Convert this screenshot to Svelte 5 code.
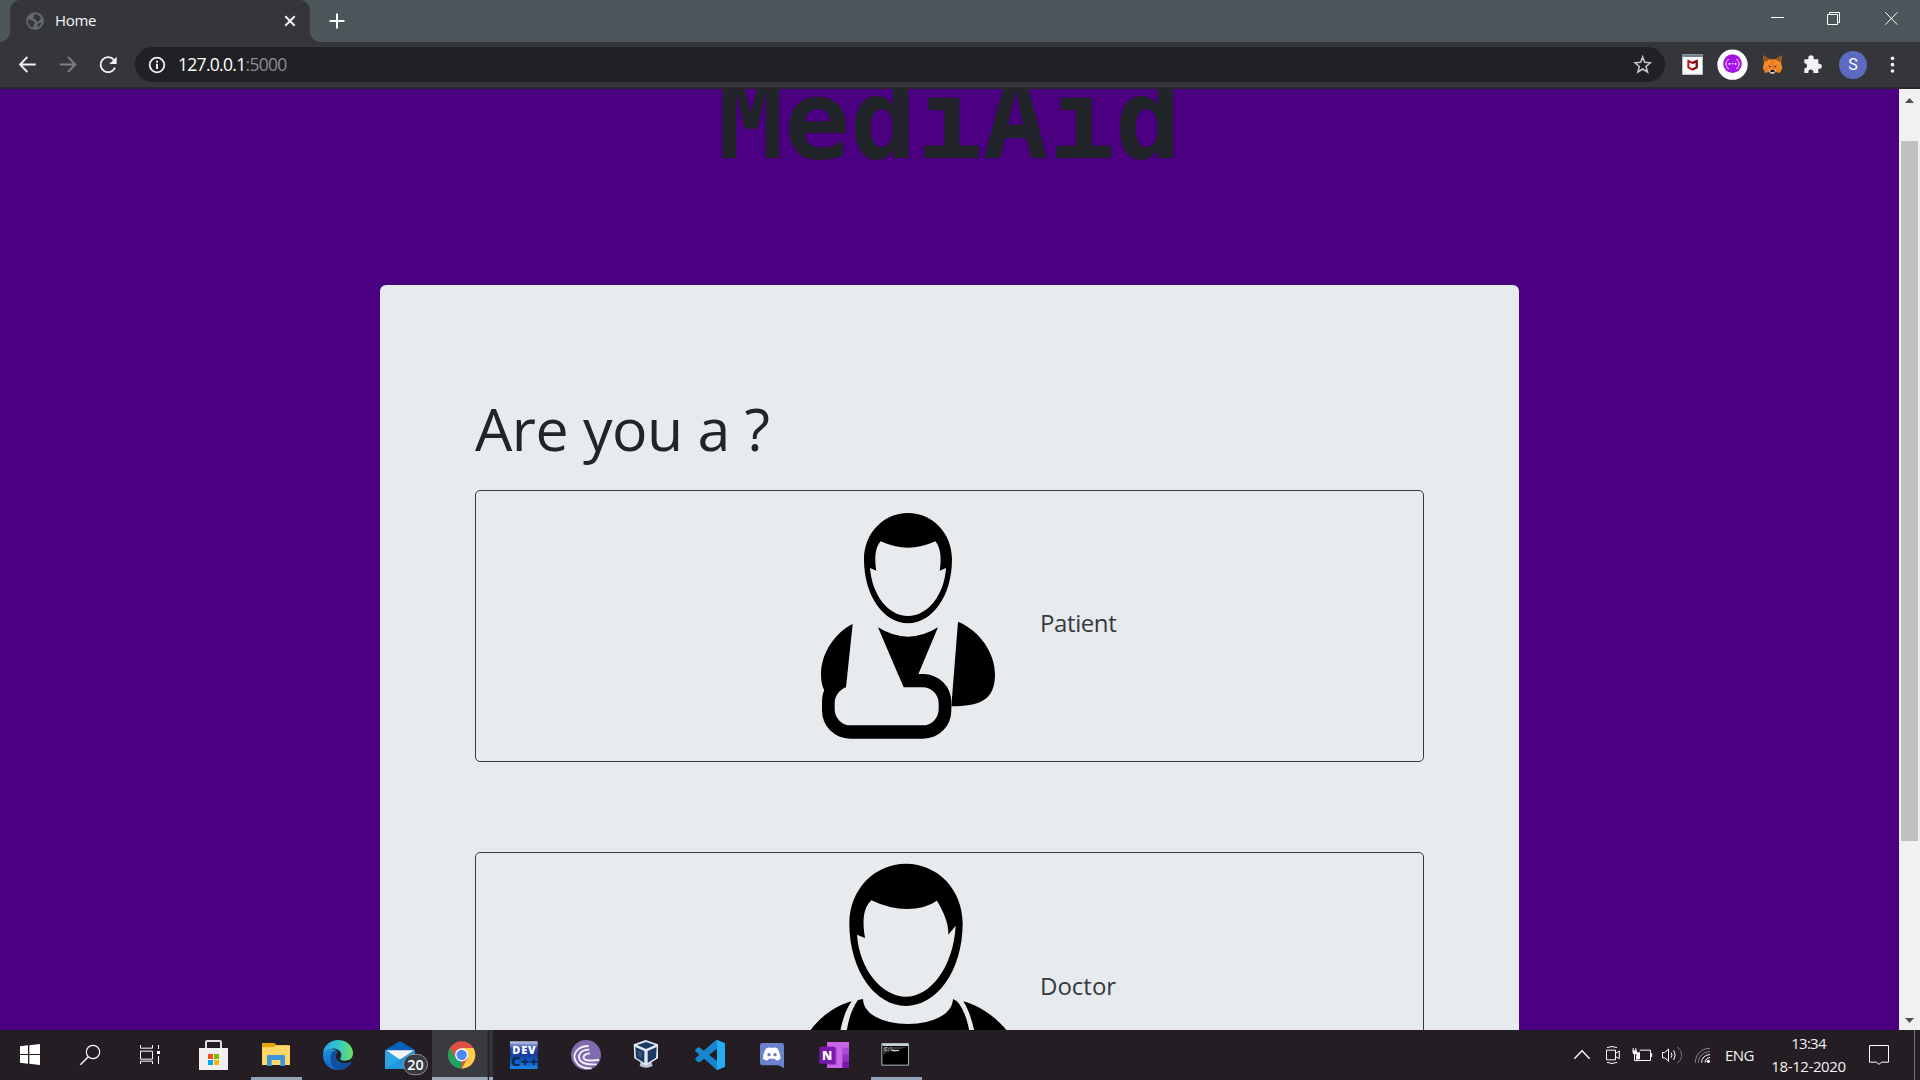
<script>
  const roles = [
    { name: 'Patient', kind: 'patient' },
    { name: 'Doctor', kind: 'doctor' }
  ];
</script>

<div class="screen">
  <header class="tabs">
    <div class="tab">
      <svg class="fav" width="18" height="18" viewBox="0 0 18 18"><circle cx="9" cy="9" r="8.8" fill="#66696e" /><path d="M2.5 6.2C4 9 7.5 8 8.5 10.500C9 12 7 12 7.500 15.500C4 15 2 12 2 9ZM8 2.500C11 1.500 14 4 15 6C13 8 13.500 10 11 9.500C9.500 8 10 7 7.500 6.500C6 5.500 8.500 4.500 8 2.500ZM11.500 12C13 11 15 11 15.500 10.500C15 13 13.500 14.500 11.500 15.300Z" fill="#35363a" /></svg>
      <span class="tab-name">Home</span>
      <svg class="close" width="12" height="12" viewBox="0 0 12 12"><path d="M1.300 1.300 10.700 10.700M10.700 1.300 1.300 10.700" stroke="#f5f5f5" stroke-width="2" /></svg>
    </div>
    <svg class="plus" width="16" height="16" viewBox="0 0 16 16"><path d="M8 .5V15.500M.5 8H15.500" stroke="#fff" stroke-width="2" /></svg>
    <svg class="win" width="170" height="42" viewBox="450 0 510 126" fill="none" stroke="#fff" stroke-width="3"><path d="M513 52.500H552M682.500 43.500H712.500V73.500H682.500ZM688.500 43V37.500H718.500V67.500H713M856 37 892 74M892 37 856 74" /></svg>
  </header>

  <div class="toolbar">
    <svg class="nav" width="135" height="45" viewBox="0 126 405 135" fill="none" stroke-width="5.500"><path d="M107 193.500H61M82 171 60 193.500 82 216" stroke="#f1f3f4" /><path d="M179 193.500H225M204 171 226 193.500 204 216" stroke="#7c7e82" /><path d="M342 180A22.500 22.500 0 1 0 345 203" stroke="#f1f3f4" /><path d="M350 170V192H328Z" fill="#f1f3f4" /></svg>
    <div class="address">
      <svg width="18" height="18" viewBox="0 0 18 18"><circle cx="9" cy="9" r="7.300" fill="none" stroke="#f1f3f4" stroke-width="1.800" /><path d="M9 7.800V13M9 4.700V6.500" stroke="#f1f3f4" stroke-width="2" /></svg>
      <span class="url">127.0.0.1<i>:5000</i></span>
      <svg class="star" width="40" height="35" viewBox="75 141 120 105"><path d="M128 171 134 187 151 188.500 138 199.500 142.500 216 128 207 113.500 216 118 199.500 105 188.500 122 187Z" fill="none" stroke="#c6c8ca" stroke-width="4.500" /></svg>
    </div>
    <svg width="47" height="45" viewBox="195 126 141 135"><path d="M247 163H308V224H247Z" fill="#fff" /><path d="M247 163H308V171H247Z" fill="#6e8490" /><path d="M247 221H308V224H247Z" fill="#ccc" /><path d="M265 183 277.500 189 290 183V202L277.500 209 265 202Z" fill="none" stroke="#c01818" stroke-width="6" /><path d="M277.500 189 290 183V202L277.500 209" fill="none" stroke="#7d1015" stroke-width="6" /></svg>
    <svg width="41" height="45" viewBox="336 126 123 135"><circle cx="397.500" cy="194" r="45.500" fill="#fff" /><circle cx="397.500" cy="191" r="28" fill="#a414e8" /><path d="M387 178Q380 178 380 185T375 192Q380 192 380 199T387 206M408 178Q415 178 415 185T420 192Q415 192 415 199T408 206" fill="none" stroke="#e5c2fb" stroke-width="3" /><path d="M386 189H391V194H386ZM404 189H409V194H404ZM395 190H400V193H395Z" fill="#fff" /></svg>
    <svg width="40" height="45" viewBox="459 126 120 135"><path d="M489 166 510 178H525L546 166 543 188 547 205 540 219 526 216 521 221H513L508 216 495 219 489 205 492 188Z" fill="#ee7d20" /><path d="M489 166 510 178 495 187ZM546 166 525 178 540 187Z" fill="#95531f" /><path d="M495 187 510 178 514 201 489 205ZM540 187 525 178 521 201 547 205Z" fill="#f58a2a" /><path d="M503 195 513 199 510 203ZM532 195 522 199 525 203Z" fill="#3b3a43" /><path d="M505 207 513 210H522L530 207 526 216 521 221H513L508 216Z" fill="#d6bfb2" /><path d="M512 210H523L524 216H511Z" fill="#171717" /></svg>
    <svg width="40" height="45" viewBox="579 126 120 135"><path d="M613 178H625V174A7.500 7.500 0 0 1 641 174V178H655V191H658A7.500 7.500 0 0 1 658 206H655V219H640V216A7.500 7.500 0 0 0 625 216V219H613V205H616A8 8 0 0 0 616 190H613Z" fill="#f1f3f4" /></svg>
    <div class="avatar"><span>S</span></div>
    <svg width="47" height="45" viewBox="819 126 141 135" fill="#f1f3f4"><circle cx="877.500" cy="175" r="5.500" /><circle cx="877.500" cy="194" r="5.500" /><circle cx="877.500" cy="213" r="5.500" /></svg>
  </div>

  <div class="view">
    <main>
      <h1>MediAid</h1>
      <section class="card">
        <h2>Are you a ?</h2>
        {#each roles as role}
          <button>
            {#if role.kind === 'patient'}
              <svg width="230" height="270" viewBox="0 3 690 810">
                <path fill-rule="evenodd" d="M324 69C398 69 456 130 456 208C456 320 395 400 324 400S192 320 192 208C192 130 250 69 324 69ZM242 154C225 172 223 205 229 242L210 234C216 315 265 378 324 378S433 315 438 234L419 242C425 205 422 172 406 154Q324 192 242 154Z" />
                <path d="M158 402C105 428 63 490 63 553C63 575 67 592 74 603L138 592ZM474 395C540 422 585 490 585 553C585 635 535 648 454 649ZM234 412Q324 468 414 412L354 555H295Z" />
                <path d="M294 552H370A84 84 0 0 1 454 637V661A84 84 0 0 1 370 746H150A84 84 0 0 1 66 661V637Q66 610 76 595L139 592A50 50 0 0 0 104 642V658A48 48 0 0 0 152 706H368A48 48 0 0 0 416 658V640A48 48 0 0 0 368 592H311Z" />
              </svg>
            {:else}
              <svg width="230" height="270" viewBox="60 39 690 810">
                <path fill-rule="evenodd" d="M378 71C474 71 548 150 548 250C548 395 468 498 378 498S208 395 208 250C208 150 282 71 378 71ZM274 181C248 205 247 245 255 294L231 284C238 390 308 470 378 470S520 385 527 257L505 284C506 245 488 212 471 182Q434 207 381 207T274 181Z" />
                <path d="M215 484C160 500 113 535 78 590V740H175C168 640 175 540 215 484ZM550 484C605 500 655 535 695 590V740H592C600 640 585 540 550 484ZM234 480 249 477C252 577 515 577 519 477L531 484C570 530 580 610 572 740H197C190 620 195 535 234 480Z" />
              </svg>
            {/if}
            <span class={role.kind}>{role.name}</span>
          </button>
        {/each}
      </section>
    </main>
    <aside>
      <svg width="21" height="17" viewBox="0 0 21 17"><path d="M6 14H15L10.500 9Z" fill="#505050" /></svg>
      <div class="thumb"></div>
      <svg class="down" width="21" height="17" viewBox="0 0 21 17"><path d="M6 5H15L10.500 10Z" fill="#505050" /></svg>
    </aside>
  </div>

  <footer>
    <svg width="60" height="50" viewBox="0 30 180 150"><path d="M60 79 84 76V102H60ZM88 75.500 120 72V102H88ZM60 105H84V131L60 128ZM88 105H120V135L88 131.500Z" fill="#fff" /></svg>
    <svg width="60" height="50" viewBox="180 30 180 150"><circle cx="279" cy="96" r="20" fill="none" stroke="#fff" stroke-width="3.500" /><path d="M264 111 241 134" stroke="#fff" stroke-width="4" /></svg>
    <svg width="62" height="50" viewBox="360 30 186 150"><path d="M421.500 75V84.500H457.500V75M421.500 93.500H457.500V117.500H421.500ZM421.500 132V123.500H457.500V132M475.500 75V87M475.500 108V132" fill="none" stroke="#fff" stroke-width="3" /><path d="M471 93H480V102H471Z" fill="#fff" /></svg>
    <svg width="62" height="50" viewBox="546 30 186 150"><path d="M618 88V66Q618 63 622 63H659Q663 63 663 66V88" fill="none" stroke="#dedede" stroke-width="6" /><path d="M597 84H684V150H597Z" fill="#f0f0f0" /><path d="M624 102H639V117H624Z" fill="#f25022" /><path d="M642 102H657V117H642Z" fill="#7fba00" /><path d="M624 120H639V135H624Z" fill="#00a4ef" /><path d="M642 120H657V135H642Z" fill="#ffb900" /></svg>
    <svg width="63" height="50" viewBox="732 30 189 150"><path d="M786 69H823L829 76H866Q870 76 870 80V135H786Z" fill="#e5a50a" /><path d="M786 82H820L828 76H866Q870 76 870 80V135H786Z" fill="#ffd766" /><path d="M801 138V109Q801 105 805 105H851Q855 105 855 109V138H841V120H815V138Z" fill="#3e95dc" /><path d="M753 171H906V180H753Z" fill="#93a2b5" /></svg>
    <svg width="62" height="50" viewBox="921 30 186 150">
      <defs><linearGradient id="edge-a" x1="0" x2="1"><stop offset="0" stop-color="#27a9e1" /><stop offset=".5" stop-color="#2fc5cf" /><stop offset="1" stop-color="#6be35b" /></linearGradient><linearGradient id="edge-b" x2="0" y2="1"><stop offset="0" stop-color="#2191d8" /><stop offset="1" stop-color="#0b65c2" /></linearGradient></defs>
      <path d="M969 101C971 76 991 60 1014 60C1041 60 1059 79 1059 99C1059 118 1045 122 1035 122C1024 122 1018 119 1022 113C1030 98 1015 84 997 86C983 87 974 93 969 101Z" fill="url(#edge-a)" />
      <path d="M969 104C968 130 988 150 1014 150C1032 150 1047 141 1055 126C1040 132 1024 132 1013 122C1003 113 1006 101 1013 96C1000 80 973 85 969 104Z" fill="url(#edge-b)" />
      <path d="M996 96C985 119 996 144 1014 150C1032 150 1047 141 1055 126C1034 135 1008 128 1006 107C1006 101 1010 97 1013 96C1008 92 1000 92 996 96Z" fill="#104f9c" />
    </svg>
    <svg width="63" height="50" viewBox="1107 30 189 150"><path d="M1155 90 1200 63 1245 90V147H1155Z" fill="#0b61b8" /><path d="M1158 91H1243L1200 120Z" fill="#f3f3f3" /><path d="M1155 91 1245 147H1155Z" fill="#2ba6e4" /><path d="M1245 91V147H1155Z" fill="#2296db" /><rect x="1210.500" y="103" width="72" height="61" rx="30.500" fill="#353b42" stroke="#a2a5a8" stroke-width="2.500" /><text class="badge" x="1246.500" y="150" text-anchor="middle">20</text></svg>
    <svg width="61" height="50" viewBox="1296 30 183 150"><path d="M1296 30H1463V180H1296Z" fill="#393b41" /><path d="M1464 30H1467V180H1464Z" fill="#1f2023" /><path d="M1467 30H1479V180H1467Z" fill="#303338" /><path d="M1296 171H1463V180H1296ZM1467 171H1479V180H1467Z" fill="#9aa8ba" /><circle cx="1385" cy="104.500" r="41" fill="#de5145" /><path d="M1349.500 84 1367 114.500 1385 125 1385 145.500A41 41 0 0 1 1349.500 84Z" fill="#1da25f" /><path d="M1385 84H1420.500A41 41 0 0 1 1385 145.500L1403 115Z" fill="#ffcd46" /><circle cx="1385" cy="104.500" r="20" fill="#f1f1f1" /><circle cx="1385" cy="104.500" r="15.500" fill="#4a8af4" /></svg>
    <svg width="62" height="50" viewBox="39 30 186 150"><defs><linearGradient id="dev" x2="0" y2="1"><stop offset="0" stop-color="#c9cfed" /><stop offset=".25" stop-color="#294ba9" /><stop offset=".5" stop-color="#153e9c" /><stop offset="1" stop-color="#1686ed" /></linearGradient></defs><path d="M90 64H173V147H90Z" fill="url(#dev)" /><text class="dev" x="97" y="101" textLength="70" fill="#fff">DEV</text><text class="cpp" x="92" y="139" textLength="83" lengthAdjust="spacingAndGlyphs" fill="#0c2857">C++</text></svg>
    <svg width="62" height="50" viewBox="225 30 186 150" fill="none"><circle cx="318" cy="105" r="45" fill="#7f6bae" /><g stroke="#f4f1fa" stroke-width="5.500"><path d="M326 78C292 78 276 103 287 123C296 141 315 146 335 145" /><path d="M328 89C301 89 291 107 301 122C311 134 329 134 350 133" /><path d="M330 100C313 100 305 112 315 119C325 124 340 121 357 120" /></g></svg>
    <svg width="62" height="50" viewBox="411 30 186 150"><path d="M482 125H514L518 138Q498 149 479 138Z" fill="#b8c4db" /><path d="M461 73 497 60 534 73V115L498 137 463 115Z" fill="#e1e8f0" /><path d="M471 75 498 66 525 75 498 87ZM466 81 493 93V129L468 113ZM530 81 503 93V129L528 113Z" fill="#1b3962" /><path d="M474 91 486 96V114L474 106Z" fill="#31547e" /></svg>
    <svg width="62" height="50" viewBox="597 30 186 150"><path d="M711 60 735 70V140L711 150 646 94Q644 91 647 88L654 82Q657 81 660 83L711 123V86L660 126Q657 128 654 126L647 120Q644 117 647 114L704 63Q707 59 711 60Z" fill="#1686cf" /><path d="M711 60 735 70V140L711 150Z" fill="#25adf2" /></svg>
    <svg width="62" height="50" viewBox="783 30 186 150"><path d="M847 69H905Q912 69 912 76V145L896 136H847Q840 136 840 129V76Q840 69 847 69Z" fill="#6c82cf" /><path d="M859 85Q868 80 875 84Q883 80 892 85Q902 100 902 116Q895 122 888 121L884 116H867L863 121Q855 122 849 116Q849 99 859 85Z" fill="#fff" /><circle cx="867" cy="104" r="5" fill="#6379c6" /><circle cx="885" cy="104" r="5" fill="#6379c6" /></svg>
    <svg width="62" height="50" viewBox="969 30 186 150"><path d="M1041 66H1107V144H1041Z" fill="#ca64e9" /><path d="M1087 83H1107V103H1087Z" fill="#ae4bd5" /><path d="M1087 103H1107V124H1087Z" fill="#9332bf" /><path d="M1087 124H1107V144H1087Z" fill="#7719aa" /><path d="M1041 83H1069V134H1041Z" fill="#8a31ae" /><path d="M1018 80H1065V131H1018Z" fill="#7719aa" /><text class="note" x="1041.500" y="120" text-anchor="middle">N</text></svg>
    <svg width="61" height="50" viewBox="1155 30 183 150"><path d="M1205.500 70.500H1285.500V135.500H1205.500Z" fill="#000" stroke="#aebabf" stroke-width="3" /><path d="M1207 72H1284V78H1207Z" fill="#c8d0d3" /><path d="M1207 80H1284C1260 90 1225 88 1207 108Z" fill="#353535" /><text class="prompt" x="1213" y="93">C:\_</text><path d="M1235 92H1257" stroke="#eee" stroke-width="3" /><path d="M1173 171H1326V180H1173Z" fill="#93a2b5" /></svg>

    <div class="tray">
      <svg width="156" height="50" viewBox="90 150 468 150" fill="none" stroke="#fff" stroke-width="3">
        <path d="M103 236 126 212 149 236" stroke-width="4" />
        <path d="M199.500 210.500H226.500V239.500H199.500ZM227 220 238 213V236L227 230M201 203Q216 196 231 203M201 247Q216 254 231 247" />
        <path d="M299 210.500H331.500V241.500H290.500V228M279.500 204V211M287.500 204V211M283.500 224V242H293M335 219V231" /><path d="M277 211H291Q291 224 284 224T277 211ZM289 217H300V238H289Z" fill="#fff" stroke="none" />
        <path d="M367.500 217.500H374L385.500 207V243L374 233.500H367.500ZM393 218Q399 225 393 233M401 211Q410 225 401 240" /><path d="M411 201C429 210 429 242 411 249" stroke="#777277" />
        <path d="M466 248C466 224 484 205 510 205M475 248C476 229 490 215 510 215" stroke="#8b878b" /><path d="M485 248C485 234 495 224 510 224M495 248C495 239 501 233 510 233" /><circle cx="505" cy="244" r="5" fill="#fff" stroke="none" />
      </svg>
      <span class="lang">ENG</span>
      <div class="clock"><span class="time">13:34</span><span class="date">18-12-2020</span></div>
      <svg width="70" height="50" viewBox="930 150 210 150" fill="none"><path d="M988.500 196.500H1045.500V246.500H1025L1017 253 1009 246.500H988.500Z" stroke="#fff" stroke-width="3" /><path d="M1123.500 150V300" stroke="#7a767b" stroke-width="3" /></svg>
    </div>
  </footer>
</div>

<style>
  :global(body) { margin: 0; overflow: hidden; }
  .screen { width: 1920px; height: 1080px; display: flex; flex-direction: column; overflow: hidden; font-family: "Open Sans", "Noto Sans", sans-serif; background: #4b0082; }
  svg { display: block; flex: none; }
  .tabs { height: 42px; flex: none; display: flex; align-items: center; background: #4c555a; padding-left: 10px; }
  .tab { position: relative; width: 300px; height: 42px; box-sizing: border-box; display: flex; align-items: center; padding: 0 14px 0 16px; background: #35363a; border-radius: 10px 10px 0 0; }
  .tab::before, .tab::after { content: ""; position: absolute; bottom: 0; width: 10px; height: 10px; }
  .tab::before { left: -10px; background: radial-gradient(circle at 0 0, transparent 9.5px, #35363a 10px); }
  .tab::after { right: -10px; background: radial-gradient(circle at 100% 0, transparent 9.5px, #35363a 10px); }
  .tab-name { margin-left: 11px; color: #f4f5f6; font-size: 15px; line-height: 20px; letter-spacing: -0.3px; padding-bottom: 3px; }
  .close { margin-left: auto; }
  .plus { margin-left: 19px; }
  .win { margin-left: auto; }
  .toolbar { height: 47px; flex: none; box-sizing: border-box; display: flex; background: #35363a; border-bottom: 2px solid #29292c; }
  .address { width: 1530px; height: 35px; margin-top: 5px; box-sizing: border-box; padding-left: 13px; display: flex; align-items: center; border-radius: 18px; background: #202124; }
  .url { margin-left: 12px; padding-bottom: 2px; color: #fff; font-size: 17.5px; line-height: 24px; letter-spacing: -0.7px; }
  .url i { font-style: normal; color: #8b8e92; }
  .star { margin-left: auto; }
  .avatar { width: 28px; height: 28px; margin: 9px 6px 0; border-radius: 50%; background: #5c6bc0; color: #fff; display: flex; align-items: center; justify-content: center; font: 16px/28px Roboto, sans-serif; }
  .view { flex: 1; min-height: 0; display: flex; overflow: hidden; }
  main { width: 1899px; height: 941px; overflow: hidden; background: #4b0082; }
  h1 { margin: -24px 0 0; text-align: center; color: #212529; font: bold 110px/110px "DejaVu Sans Mono", monospace; }
  .card { width: 1139px; height: 1100px; box-sizing: border-box; margin: 110px auto 0; padding: 107px 95px 0; background: #e8ebee; border-radius: 6px; }
  h2 { margin: 0 0 26px; height: 72px; color: #212529; font-weight: 400; font-size: 59px; line-height: 72px; letter-spacing: -0.5px; white-space: pre; }
  button { width: 100%; height: 272px; box-sizing: border-box; margin: 0 0 90px; padding: 0 0 0 324px; display: flex; align-items: center; border: 1px solid #343a40; border-radius: 5px; background: none; color: #343a40; font: 24px/36px "Open Sans", sans-serif; }
  button span { margin-left: 10px; padding-bottom: 6px; letter-spacing: -0.4px; }
  button .doctor { padding-bottom: 4px; letter-spacing: 0; }
  aside { width: 21px; display: flex; flex-direction: column; background: #f1f1f1; }
  .thumb { width: 17px; height: 700px; margin: 35px 2px 0; background: #c1c1c1; }
  .down { margin-top: auto; }
  footer { height: 50px; flex: none; display: flex; background: #241d24; }
  .badge { font: 600 43px "Open Sans", sans-serif; fill: #fff; }
  .dev { font: 800 33px "Open Sans", sans-serif; }
  .cpp { font: 800 36px "Open Sans", sans-serif; }
  .note { font: 800 37px "Open Sans", sans-serif; fill: #fff; }
  .prompt { font: bold 14px "Liberation Mono", monospace; fill: #ddd; }
  .tray { margin-left: auto; display: flex; align-items: center; color: #f2f2f2; font-size: 15px; }
  .lang { width: 44px; letter-spacing: -0.6px; text-indent: -1px; line-height: 20px; }
  .clock { width: 80px; height: 50px; display: flex; flex-direction: column; align-items: center; line-height: 23px; padding: 2px 3px 0 0; box-sizing: border-box; }
  .time { letter-spacing: -0.7px; }
  .date { letter-spacing: -0.4px; }
</style>
